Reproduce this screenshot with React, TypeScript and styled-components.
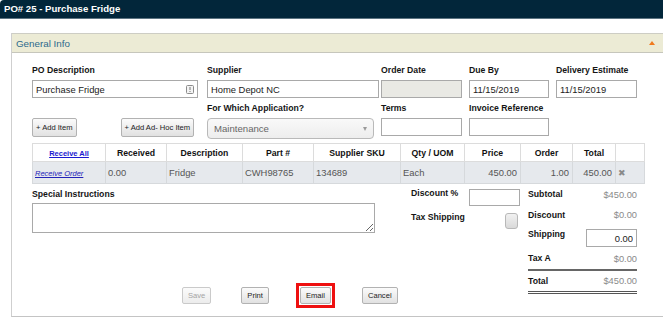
import React from "react";
import styled, { createGlobalStyle, css } from "styled-components";

const Global = createGlobalStyle`
  html, body { margin: 0; padding: 0; background: #fff; }
  body { font-family: "Liberation Sans", Arial, sans-serif; }
  * { box-sizing: border-box; }
`;

const Page = styled.div`
  width: 663px;
  height: 318px;
  overflow: hidden;
  background: #fff;
`;

const TitleBar = styled.div`
  height: 19px;
  background: #02263a;
  border-bottom: 1px solid #5d7482;
  border-top-left-radius: 4px;
  color: #fff;
  font-weight: bold;
  font-size: 9.6px;
  line-height: 18px;
  padding-left: 4px;
`;

const Panel = styled.section`
  margin: 14px 0 0 11px;
  width: 652px;
  height: 284px;
  border-left: 1px solid #cfcfcf;
  border-bottom: 1px solid #c4c4c4;
  display: flex;
  flex-direction: column;
`;

const PanelHeader = styled.div`
  height: 20px;
  background: #ecebd5;
  border-top: 1px solid #cdcdc4;
  border-bottom: 1px solid #c6c6bc;
  display: flex;
  align-items: center;
  justify-content: space-between;
  padding: 0 8px 0 4px;
`;

const PanelTitle = styled.span`
  color: #2c6a8c;
  font-size: 9.8px;
`;

const Caret = styled.span`
  width: 0;
  height: 0;
  border-left: 3px solid transparent;
  border-right: 3px solid transparent;
  border-bottom: 4px solid #f07a1e;
`;

const PanelBody = styled.div`
  padding: 11px 0 0 20px;
`;

const FieldGrid = styled.div`
  display: grid;
  grid-template-columns: 175px 174px 88px 87px 81px;
  row-gap: 4px;
`;

const Field = styled.div`
  display: flex;
  flex-direction: column;
  gap: 3px;
`;

const Label = styled.div`
  height: 13px;
  line-height: 13px;
  font-size: 8.7px;
  font-weight: bold;
  color: #151515;
  white-space: nowrap;
`;

const TextInput = styled.input<{ $w: number; $h?: number; $disabled?: boolean; $right?: boolean }>`
  display: block;
  width: ${(p) => p.$w}px;
  height: ${(p) => p.$h ?? 18}px;
  border: 1px solid #a9a9a9;
  background: ${(p) => (p.$disabled ? "#e9e9e4" : "#fff")};
  font-family: inherit;
  font-size: 9.4px;
  color: #222;
  padding: 0 3px;
  margin: 0;
  outline: none;
  text-align: ${(p) => (p.$right ? "right" : "left")};
`;

const InputWrap = styled.div`
  position: relative;
  width: 166px;
`;

const FieldIcon = styled.svg`
  position: absolute;
  right: 4px;
  top: 5px;
`;

const ButtonsCell = styled.div`
  display: flex;
  gap: 44px;
  align-items: flex-start;
  padding-top: 16px;
`;

const btnBase = css`
  font-family: inherit;
  font-size: 7.6px;
  color: #222;
  background: linear-gradient(#fbfbfb, #e1e1e1);
  border: 1px solid #b2b2b2;
  border-radius: 2px;
  white-space: nowrap;
  margin: 0;
  cursor: default;
`;

const SmallButton = styled.button`
  ${btnBase};
  height: 19px;
  padding: 0 3px;
`;

const SelectBox = styled.div`
  width: 167px;
  height: 21px;
  border: 1px solid #b9b9b9;
  border-radius: 4px;
  background: linear-gradient(#f9f9f9, #ededed);
  display: flex;
  align-items: center;
  justify-content: space-between;
  padding: 0 6px 0 6px;
  font-size: 9.6px;
  color: #666;
`;

const SelectArrow = styled.span`
  width: 0;
  height: 0;
  border-left: 2.5px solid transparent;
  border-right: 2.5px solid transparent;
  border-top: 4px solid #9a9a9a;
`;

const Table = styled.table`
  margin-top: 4px;
  border-collapse: collapse;
  table-layout: fixed;
  width: 612px;
  border: 1px solid #dadada;
`;

const Col = styled.col<{ $w: number }>`
  width: ${(p) => p.$w}px;
`;

const HeadCell = styled.th`
  height: 18px;
  padding: 0 2px;
  border: 1px solid #dcdcdc;
  background: #fff;
  font-size: 8.7px;
  font-weight: bold;
  color: #111;
  text-align: center;
  white-space: nowrap;
`;

const BodyRow = styled.tr`
  background: #e6e9ed;
`;

const BodyCell = styled.td<{ $right?: boolean }>`
  height: 22px;
  padding: 0 3px 0 2px;
  border: 1px solid #d6d9dc;
  font-size: 9.4px;
  color: #555;
  text-align: ${(p) => (p.$right ? "right" : "left")};
  white-space: nowrap;
`;

const Link = styled.a<{ $italic?: boolean }>`
  color: ${(p) => (p.$italic ? "#2323b8" : "#1a1ad0")};
  text-decoration: underline;
  font-size: 7.5px;
  font-style: ${(p) => (p.$italic ? "italic" : "normal")};
  font-weight: ${(p) => (p.$italic ? "normal" : "bold")};
`;

const RemoveMark = styled.span`
  color: #8a8a8a;
  font-size: 9px;
`;

const BottomArea = styled.div`
  margin-top: 3px;
  display: grid;
  grid-template-columns: 379px 117px 109px;
  align-items: start;
`;

const LeftCol = styled.div`
  display: flex;
  flex-direction: column;
  padding-top: 1px;
`;

const TextArea = styled.textarea`
  display: block;
  margin: 2px 0 0;
  width: 343px;
  height: 30px;
  border: 1px solid #a9a9a9;
  font-family: inherit;
  font-size: 9.4px;
  outline: none;
  resize: both;
`;

const ButtonRow = styled.div`
  margin-top: 54px;
  padding-left: 150px;
  display: flex;
  gap: 27px;
  align-items: center;
`;

const ActionButton = styled.button<{ $mr?: number }>`
  ${btnBase};
  height: 17px;
  padding: 0 5px;
  margin-right: ${(p) => p.$mr ?? 0}px;
  &:disabled {
    color: #a4a4a4;
    border-color: #cacaca;
    background: linear-gradient(#fbfbfb, #ececec);
  }
`;

const Highlight = styled.span`
  display: flex;
  border: 3px solid #ee1010;
  padding: 1px;
  margin: -4px 0;
`;

const MidCol = styled.div`
  display: flex;
  flex-direction: column;
`;

const MidRow = styled.div<{ $gap?: number }>`
  display: flex;
  align-items: flex-start;
  margin-top: ${(p) => p.$gap ?? 0}px;
`;

const MidLabel = styled(Label)`
  width: 58px;
`;

const MidInput = styled(TextInput)`
  margin-top: 2px;
`;

const Checkbox = styled.span`
  margin: 2px 10px 0 auto;
  width: 13px;
  height: 16px;
  border: 1px solid #b8b8b8;
  border-radius: 3px;
  background: linear-gradient(#f1f1f1, #d9d9d9);
`;

const Summary = styled.div`
  display: flex;
  flex-direction: column;
`;

const SumRow = styled.div<{ $h: number; $rule?: "single" | "double" }>`
  height: ${(p) => p.$h}px;
  display: flex;
  align-items: center;
  justify-content: space-between;
  ${(p) => p.$rule === "single" && css`border-bottom: 2px solid #666;`}
  ${(p) => p.$rule === "double" && css`border-bottom: 3px double #555;`}
`;

const SumLabel = styled(Label)<{ $top?: boolean }>`
  align-self: ${(p) => (p.$top ? "flex-start" : "center")};
`;

const SumValue = styled.span`
  font-size: 9.3px;
  color: #8a8a8a;
`;

const columns = [
  { w: 73, h: "link" },
  { w: 61, h: "Received" },
  { w: 76, h: "Description" },
  { w: 71, h: "Part #" },
  { w: 87, h: "Supplier SKU" },
  { w: 64, h: "Qty / UOM" },
  { w: 56, h: "Price" },
  { w: 52, h: "Order" },
  { w: 43, h: "Total" },
  { w: 29, h: "" },
];

export default function App() {
  return (
    <Page>
      <Global />
      <TitleBar>PO# 25 - Purchase Fridge</TitleBar>
      <Panel>
        <PanelHeader>
          <PanelTitle>General Info</PanelTitle>
          <Caret />
        </PanelHeader>
        <PanelBody>
          <FieldGrid>
            <Field>
              <Label>PO Description</Label>
              <InputWrap>
                <TextInput $w={166} defaultValue="Purchase Fridge" />
                <FieldIcon width="8" height="9" viewBox="0 0 8 9">
                  <rect x="0.5" y="0.5" width="7" height="8" rx="1" fill="#f4f4f4" stroke="#8c8c8c" />
                  <line x1="4" y1="2" x2="4" y2="5" stroke="#777" strokeWidth="1" />
                  <rect x="3.5" y="6" width="1" height="1" fill="#777" />
                </FieldIcon>
              </InputWrap>
            </Field>
            <Field>
              <Label>Supplier</Label>
              <TextInput $w={172} defaultValue="Home Depot NC" />
            </Field>
            <Field>
              <Label>Order Date</Label>
              <TextInput $w={81} $disabled readOnly defaultValue="" />
            </Field>
            <Field>
              <Label>Due By</Label>
              <TextInput $w={80} defaultValue="11/15/2019" />
            </Field>
            <Field>
              <Label>Delivery Estimate</Label>
              <TextInput $w={81} defaultValue="11/15/2019" />
            </Field>

            <ButtonsCell>
              <SmallButton>+ Add Item</SmallButton>
              <SmallButton>+ Add Ad- Hoc Item</SmallButton>
            </ButtonsCell>
            <Field>
              <Label>For Which Application?</Label>
              <SelectBox>
                <span>Maintenance</span>
                <SelectArrow />
              </SelectBox>
            </Field>
            <Field>
              <Label>Terms</Label>
              <TextInput $w={81} defaultValue="" />
            </Field>
            <Field>
              <Label>Invoice Reference</Label>
              <TextInput $w={80} defaultValue="" />
            </Field>
          </FieldGrid>

          <Table>
            <colgroup>
              {columns.map((c, i) => (
                <Col key={i} $w={c.w} />
              ))}
            </colgroup>
            <thead>
              <tr>
                {columns.map((c, i) => (
                  <HeadCell key={i}>
                    {c.h === "link" ? <Link href="#">Receive All</Link> : c.h}
                  </HeadCell>
                ))}
              </tr>
            </thead>
            <tbody>
              <BodyRow>
                <BodyCell>
                  <Link href="#" $italic>
                    Receive Order
                  </Link>
                </BodyCell>
                <BodyCell>0.00</BodyCell>
                <BodyCell>Fridge</BodyCell>
                <BodyCell>CWH98765</BodyCell>
                <BodyCell>134689</BodyCell>
                <BodyCell>Each</BodyCell>
                <BodyCell $right>450.00</BodyCell>
                <BodyCell $right>1.00</BodyCell>
                <BodyCell $right>450.00</BodyCell>
                <BodyCell>
                  <RemoveMark>✖</RemoveMark>
                </BodyCell>
              </BodyRow>
            </tbody>
          </Table>

          <BottomArea>
            <LeftCol>
              <Label>Special Instructions</Label>
              <TextArea />
              <ButtonRow>
                <ActionButton disabled $mr={3}>
                  Save
                </ActionButton>
                <ActionButton>Print</ActionButton>
                <Highlight>
                  <ActionButton>Email</ActionButton>
                </Highlight>
                <ActionButton>Cancel</ActionButton>
              </ButtonRow>
            </LeftCol>
            <MidCol>
              <MidRow>
                <MidLabel>Discount %</MidLabel>
                <MidInput $w={51} $h={17} defaultValue="" />
              </MidRow>
              <MidRow $gap={5}>
                <Label>Tax Shipping</Label>
                <Checkbox />
              </MidRow>
            </MidCol>
            <Summary>
              <SumRow $h={15}>
                <SumLabel>Subtotal</SumLabel>
                <SumValue>$450.00</SumValue>
              </SumRow>
              <SumRow $h={26}>
                <SumLabel>Discount</SumLabel>
                <SumValue>$0.00</SumValue>
              </SumRow>
              <SumRow $h={20}>
                <SumLabel $top>Shipping</SumLabel>
                <TextInput $w={51} $right defaultValue="0.00" />
              </SumRow>
              <SumRow $h={23} $rule="single">
                <SumLabel>Tax A</SumLabel>
                <SumValue>$0.00</SumValue>
              </SumRow>
              <SumRow $h={23} $rule="double">
                <SumLabel>Total</SumLabel>
                <SumValue>$450.00</SumValue>
              </SumRow>
            </Summary>
          </BottomArea>
        </PanelBody>
      </Panel>
    </Page>
  );
}
